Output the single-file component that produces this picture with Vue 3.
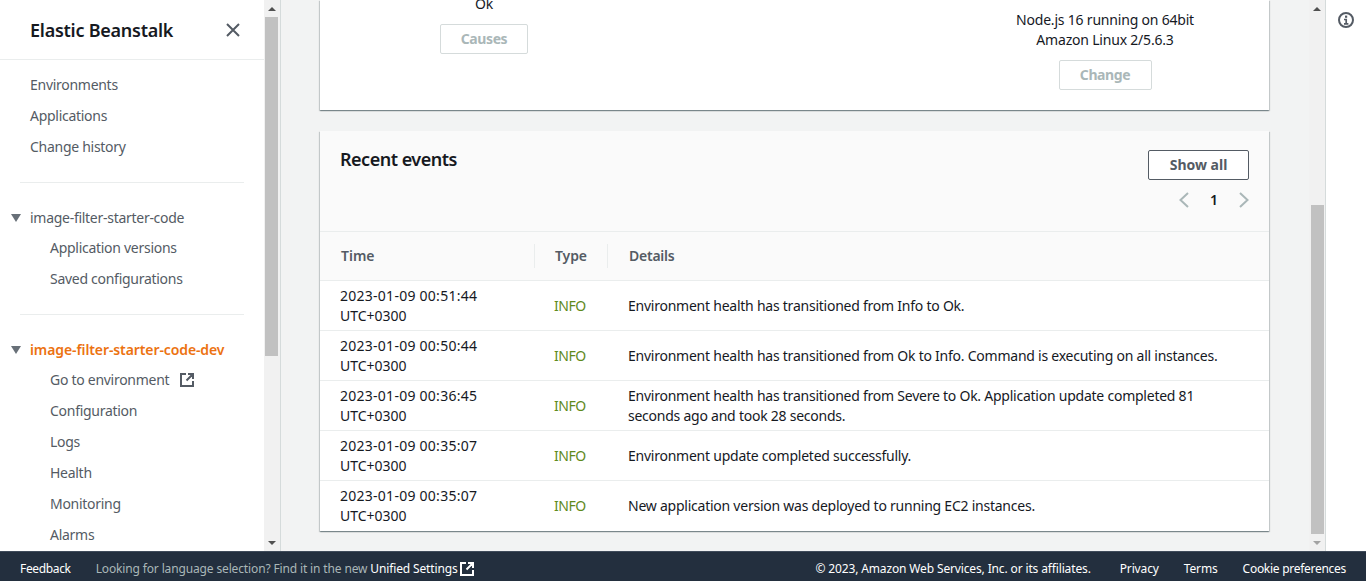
<script setup>
const topLinks = ['Environments', 'Applications', 'Change history']
const appLinks = ['Application versions', 'Saved configurations']
const envLinks = ['Configuration', 'Logs', 'Health', 'Monitoring', 'Alarms']

const events = [
  { time: '2023-01-09 00:51:44', details: 'Environment health has transitioned from Info to Ok.' },
  { time: '2023-01-09 00:50:44', details: 'Environment health has transitioned from Ok to Info. Command is executing on all instances.' },
  { time: '2023-01-09 00:36:45', details: 'Environment health has transitioned from Severe to Ok. Application update completed 81 seconds ago and took 28 seconds.' },
  { time: '2023-01-09 00:35:07', details: 'Environment update completed successfully.' },
  { time: '2023-01-09 00:35:07', details: 'New application version was deployed to running EC2 instances.' }
]
</script>

<template>
  <div class="page">
    <div class="body">
      <!-- side navigation -->
      <aside class="sidebar">
        <nav class="nav">
          <div class="nav-head">
            <span class="nav-title">Elastic Beanstalk</span>
            <svg class="close" width="16" height="16" viewBox="0 0 16 16" fill="none">
              <path d="M2 2l12 12M14 2L2 14" stroke="#545b64" stroke-width="2" />
            </svg>
          </div>
          <ul class="links top">
            <li v-for="link in topLinks" :key="link">{{ link }}</li>
          </ul>
          <hr class="divider" />
          <div class="group-title">
            <span class="caret"></span>
            <span>image-filter-starter-code</span>
          </div>
          <ul class="links sub">
            <li v-for="link in appLinks" :key="link">{{ link }}</li>
          </ul>
          <hr class="divider" />
          <div class="group-title active">
            <span class="caret"></span>
            <span>image-filter-starter-code-dev</span>
          </div>
          <ul class="links sub">
            <li class="external">
              Go to environment
              <svg width="16" height="16" viewBox="0 0 16 16" fill="none">
                <path d="M7 2H2v12h12V9M9 2h5v5M14 2L7.5 8.5" stroke="#545b64" stroke-width="2" />
              </svg>
            </li>
            <li v-for="link in envLinks" :key="link">{{ link }}</li>
          </ul>
        </nav>
        <div class="scrollbar nav-scroll">
          <span class="arrow up"></span>
          <div class="track"><div class="thumb"></div></div>
          <span class="arrow down dark"></span>
        </div>
      </aside>

      <main class="main">
        <section class="card summary">
          <div class="summary-col health">
            <div class="value">Ok</div>
            <button class="btn disabled">Causes</button>
          </div>
          <div class="summary-col platform">
            <div class="value">Node.js 16 running on 64bit<br />Amazon Linux 2/5.6.3</div>
            <button class="btn disabled">Change</button>
          </div>
        </section>

        <section class="card events">
          <header class="events-head">
            <h2>Recent events</h2>
            <div class="head-actions">
              <button class="btn primary">Show all</button>
              <div class="pager">
                <svg width="10" height="16" viewBox="0 0 10 16" fill="none"><path d="M9 1L1.5 8L9 15" stroke="#aab7b8" stroke-width="2" /></svg>
                <span>1</span>
                <svg width="10" height="16" viewBox="0 0 10 16" fill="none"><path d="M1 1l7.5 7L1 15" stroke="#aab7b8" stroke-width="2" /></svg>
              </div>
            </div>
          </header>
          <div class="row head-row">
            <div class="col-time"><span>Time</span></div>
            <div class="col-type"><span>Type</span></div>
            <div class="col-details"><span>Details</span></div>
          </div>
          <div v-for="(ev, i) in events" :key="i" class="row">
            <div class="col-time"><span class="stamp">{{ ev.time }}</span><br />UTC+0300</div>
            <div class="col-type info">INFO</div>
            <div class="col-details">{{ ev.details }}</div>
          </div>
        </section>
      </main>

      <div class="scrollbar main-scroll">
        <span class="arrow up"></span>
        <div class="track"><div class="thumb"></div></div>
        <span class="arrow down"></span>
      </div>

      <aside class="tools">
        <svg width="16" height="16" viewBox="0 0 16 16" fill="none">
          <circle cx="8" cy="8" r="7" stroke="#545b64" stroke-width="2" />
          <path d="M6 7.5H8.2V11.8M6 11.8H10.4" stroke="#545b64" stroke-width="1.7" />
          <rect x="7" y="3.6" width="2.2" height="2.2" fill="#545b64" />
        </svg>
      </aside>
    </div>

    <footer class="footer">
      <span class="feedback">Feedback</span>
      <span class="lang">Looking for language selection? Find it in the new <b>Unified Settings</b></span>
      <svg class="footer-ext" width="16" height="16" viewBox="0 0 16 16" fill="none">
        <path d="M7 2H2v12h12V9M9 2h5v5M14 2L7.5 8.5" stroke="#fff" stroke-width="2" />
      </svg>
      <span class="copy">© 2023, Amazon Web Services, Inc. or its affiliates.</span>
      <span class="foot-link">Privacy</span>
      <span class="foot-link">Terms</span>
      <span class="foot-link cookie">Cookie preferences</span>
    </footer>
  </div>
</template>

<style scoped>
.page {
  height: 581px;
  display: flex;
  flex-direction: column;
  overflow: hidden;
  font-family: "Noto Sans", "Open Sans", sans-serif;
  font-size: 14px;
  letter-spacing: -0.28px;
  line-height: 20px;
  color: #16191f;
}

.page * {
  box-sizing: border-box;
}

.body {
  flex: 1;
  min-height: 0;
  display: flex;
  background: #f2f3f3;
}

.sidebar {
  width: 281px;
  flex-shrink: 0;
  display: flex;
  background: #fff;
  border-right: 1px solid #d5dbdb;
}

.nav {
  width: 264px;
  overflow: hidden;
}

.nav-head {
  height: 60px;
  padding: 0 23px 0 30px;
  display: flex;
  align-items: center;
  justify-content: space-between;
  border-bottom: 1px solid #eaeded;
}

.nav-title {
  font-size: 18px;
  letter-spacing: -0.25px;
  font-weight: 600;
  color: #16191f;
}

.links {
  list-style: none;
  margin: 0;
  padding: 0;
  color: #545b64;
}

.links li {
  height: 31px;
  line-height: 31px;
  white-space: nowrap;
}

.links.top {
  padding: 9px 0 20px 30px;
}

.links.sub {
  margin-top: -1px;
  padding-left: 50px;
}

.external {
  display: flex;
  align-items: center;
  gap: 10px;
}

.divider {
  margin: 0 20px 20px;
  border: 0;
  border-top: 1px solid #eaeded;
}

.sub + .divider {
  margin-top: 20px;
}

.group-title {
  height: 30px;
  display: flex;
  align-items: center;
  gap: 9px;
  padding-left: 11px;
  color: #545b64;
  white-space: nowrap;
}

.group-title.active {
  color: #ec7211;
  letter-spacing: -0.1px;
  font-weight: 600;
}

.caret {
  width: 0;
  height: 0;
  border-left: 5px solid transparent;
  border-right: 5px solid transparent;
  border-top: 8px solid #687078;
}

.scrollbar {
  width: 16px;
  flex-shrink: 0;
  display: flex;
  flex-direction: column;
  align-items: center;
  background: #f1f1f1;
}

.arrow {
  width: 0;
  height: 0;
  margin: 7px 0 6px;
  border-left: 4px solid transparent;
  border-right: 4px solid transparent;
}

.arrow.up {
  border-bottom: 4px solid #505050;
}

.arrow.down {
  border-top: 4px solid #a3a3a3;
}

.arrow.down.dark {
  border-top-color: #505050;
}

.track {
  flex: 1;
  width: 100%;
  display: flex;
  flex-direction: column;
}

.thumb {
  background: #c1c1c1;
}

.nav-scroll .thumb {
  height: 339px;
  margin: 0 2px 0 1px;
}

.main-scroll .track {
  justify-content: flex-end;
}

.main-scroll .thumb {
  height: 329px;
  margin: 0 1px 0 2px;
}

.main {
  flex: 1;
  min-width: 0;
  padding: 0 40px 0 39px;
  overflow: hidden;
}

.card {
  background: #fff;
  box-shadow: 0 1px 1px 0 rgba(0, 28, 36, 0.3), 1px 1px 1px 0 rgba(0, 28, 36, 0.15), -1px 1px 1px 0 rgba(0, 28, 36, 0.15);
}

.summary {
  height: 110px;
  display: flex;
}

.summary-col {
  display: flex;
  flex-direction: column;
  align-items: center;
  text-align: center;
}

.health {
  margin-top: -6px;
  margin-left: 120px;
  width: 88px;
}

.platform {
  margin-top: 10px;
  margin-left: 477px;
  width: 200px;
}

.value {
  letter-spacing: -0.2px;
}

.btn {
  font: inherit;
  font-weight: 700;
  height: 30px;
  border-radius: 2px;
  background: #fff;
  padding: 0;
}

.btn.disabled {
  color: #aab7b8;
  border: 1px solid #d5dbdb;
  letter-spacing: -0.4px;
}

.health .btn {
  width: 88px;
  margin-top: 10px;
}

.platform .btn {
  width: 93px;
  margin-top: 10px;
}

.btn.primary {
  width: 101px;
  letter-spacing: 0;
  color: #545b64;
  border: 1px solid #545b64;
}

.events {
  margin-top: 21px;
}

.events-head {
  height: 101px;
  padding: 19px 20px 0 20px;
  display: flex;
  justify-content: space-between;
  background: #fafafa;
  border-bottom: 1px solid #eaeded;
}

.events-head h2 {
  margin: -1px 0 0;
  font-size: 18px;
  letter-spacing: -0.5px;
  line-height: 20px;
  font-weight: 600;
}

.head-actions {
  display: flex;
  flex-direction: column;
  align-items: flex-end;
}

.pager {
  margin-top: 10px;
  display: flex;
  align-items: center;
  gap: 21px;
  font-weight: 600;
  letter-spacing: 0;
}

.row {
  height: 50px;
  display: flex;
  align-items: center;
  border-bottom: 1px solid #eaeded;
}

.row:last-child {
  border-bottom: 0;
}

.head-row {
  height: 49px;
  letter-spacing: -0.1px;
  font-weight: 600;
  color: #545b64;
  background: #fafafa;
}

.col-time {
  width: 215px;
  padding-left: 20px;
  flex-shrink: 0;
  letter-spacing: 0;
}

.stamp {
  letter-spacing: 0.26px;
}

.col-type {
  width: 73px;
  padding-left: 19px;
  flex-shrink: 0;
}

.col-details {
  flex: 1;
  padding: 0 30px 0 20px;
  letter-spacing: -0.24px;
}

.head-row > div {
  height: 24px;
  display: flex;
  align-items: center;
}

.head-row .col-time,
.head-row .col-type {
  border-right: 1px solid #eaeded;
}

.head-row .col-time,
.head-row .col-details {
  padding-left: 21px;
}

.head-row .col-type {
  padding-left: 20px;
}

.info {
  color: #5f8a1c;
  letter-spacing: -0.45px;
}

.tools {
  width: 41px;
  flex-shrink: 0;
  background: #fff;
  border-left: 1px solid #d5dbdb;
  display: flex;
  justify-content: center;
  padding-top: 12px;
}

.footer {
  height: 30px;
  flex-shrink: 0;
  display: flex;
  align-items: center;
  padding: 5px 20px 0;
  background: #232f3e;
  border-top: 1px solid #3f4b5a;
  color: #fff;
  font-size: 12px;
  letter-spacing: -0.14px;
  white-space: nowrap;
}

.feedback {
  margin-right: 25px;
  letter-spacing: -0.35px;
}

.lang {
  color: #aab7b8;
}

.lang b {
  font-weight: 400;
  color: #fff;
}

.footer-ext {
  margin-left: 1px;
}

.copy {
  margin-left: auto;
  margin-right: 29px;
}

.foot-link {
  margin-right: 25px;
}

.foot-link.cookie {
  margin-right: 0;
  letter-spacing: -0.28px;
}
</style>

<style>
html, body {
  margin: 0;
  overflow: hidden;
}
</style>
